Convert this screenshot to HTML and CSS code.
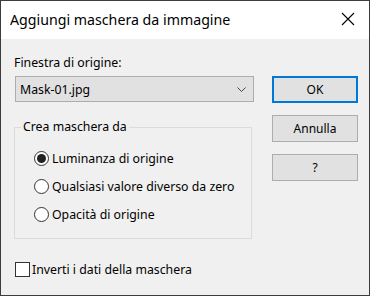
FILE: index.html
```html
<!DOCTYPE html>
<html lang="it">
<head>
    <meta charset="UTF-8">
    <title>Aggiungi maschera da immagine</title>
    <link rel="stylesheet" href="styles.css">
</head>
<body>

<div class="window">
    <div class="titlebar">
        <span class="title">Aggiungi maschera da immagine</span>
        <svg class="close" width="14" height="14" viewBox="0 0 14 14">
            <path d="M1 1 L13 13 M13 1 L1 13" stroke="#000" stroke-width="1.1" fill="none"/>
        </svg>
    </div>

    <div class="content">
        <div class="main">
            <label class="field-label" for="source">Finestra di origine:</label>
            <div class="combo" id="source">
                <span>Mask-01.jpg</span>
                <svg width="9" height="5" viewBox="0 0 9 5">
                    <path d="M0.5 0.5 L4.5 4.5 L8.5 0.5" stroke="#444" stroke-width="1" fill="none"/>
                </svg>
            </div>

            <fieldset class="group">
                <legend>Crea maschera da</legend>
                <label class="option"><input type="radio" name="mode" checked> Luminanza di origine</label>
                <label class="option"><input type="radio" name="mode"> Qualsiasi valore diverso da zero</label>
                <label class="option"><input type="radio" name="mode"> Opacità di origine</label>
            </fieldset>

            <label class="check"><input type="checkbox"> Inverti i dati della maschera</label>
        </div>

        <div class="buttons">
            <button class="default">OK</button>
            <button>Annulla</button>
            <button>?</button>
        </div>
    </div>
</div>

</body>
</html>
```

FILE: styles.css
```css
html, body {
    margin: 0;
    padding: 0;
}
body {
    font-family: 'Noto Sans', Arial, sans-serif;
    font-size: 12.3px;
    color: #000;
    background: #f0f0f0;
}
.window {
    width: 370px;
    height: 296px;
    box-sizing: border-box;
    border: 1px solid #3c3c3c;
    background: #f0f0f0;
    display: flex;
    flex-direction: column;
}
.titlebar {
    height: 38px;
    flex-shrink: 0;
    background: #fff;
    display: flex;
    align-items: center;
    justify-content: space-between;
    padding: 0 14px 0 9px;
}
.title {
    font-size: 14.2px;
    margin-top: -2px;
}
.close {
    margin-top: -3px;
}
.content {
    display: flex;
    padding: 15px 0 0 13px;
}
.main {
    width: 240px;
    display: flex;
    flex-direction: column;
}
.field-label {
    line-height: 17px;
    margin-bottom: 5px;
}
.combo {
    height: 24px;
    margin-left: 1px;
    border: 1px solid #adadad;
    background: #e1e1e1;
    display: flex;
    align-items: center;
    justify-content: space-between;
    padding: 0 7px 0 4px;
}
.group {
    margin: 18px 2px 0 0;
    padding: 10px 0 20px 19px;
    border: 1px solid #dcdcdc;
    height: 87px;
    box-sizing: content-box;
}
.group legend {
    padding: 0 2px;
    margin-left: -13px;
    line-height: 14px;
}
.option {
    display: flex;
    align-items: center;
    height: 28px;
    gap: 3px;
}
input[type=radio] {
    appearance: none;
    width: 15px;
    height: 15px;
    margin: 0;
    border: 1px solid #333;
    border-radius: 50%;
    background: #fff;
    display: grid;
    place-content: center;
}
input[type=radio]:checked::before {
    content: "";
    width: 9px;
    height: 9px;
    border-radius: 50%;
    background: #222;
}
.check {
    display: flex;
    align-items: center;
    gap: 2px;
    margin-top: 22px;
    margin-left: 1px;
}
input[type=checkbox] {
    appearance: none;
    width: 15px;
    height: 15px;
    margin: 0;
    border: 1px solid #333;
    background: #fff;
}
.buttons {
    margin-left: 18px;
    display: flex;
    flex-direction: column;
    gap: 12px;
    padding-top: 22px;
}
button {
    width: 86px;
    height: 27px;
    font-family: inherit;
    font-size: 12px;
    background: #e1e1e1;
    border: 1px solid #adadad;
    color: #000;
    padding: 0;
}
button.default {
    border: 2px solid #0078d7;
}
```
